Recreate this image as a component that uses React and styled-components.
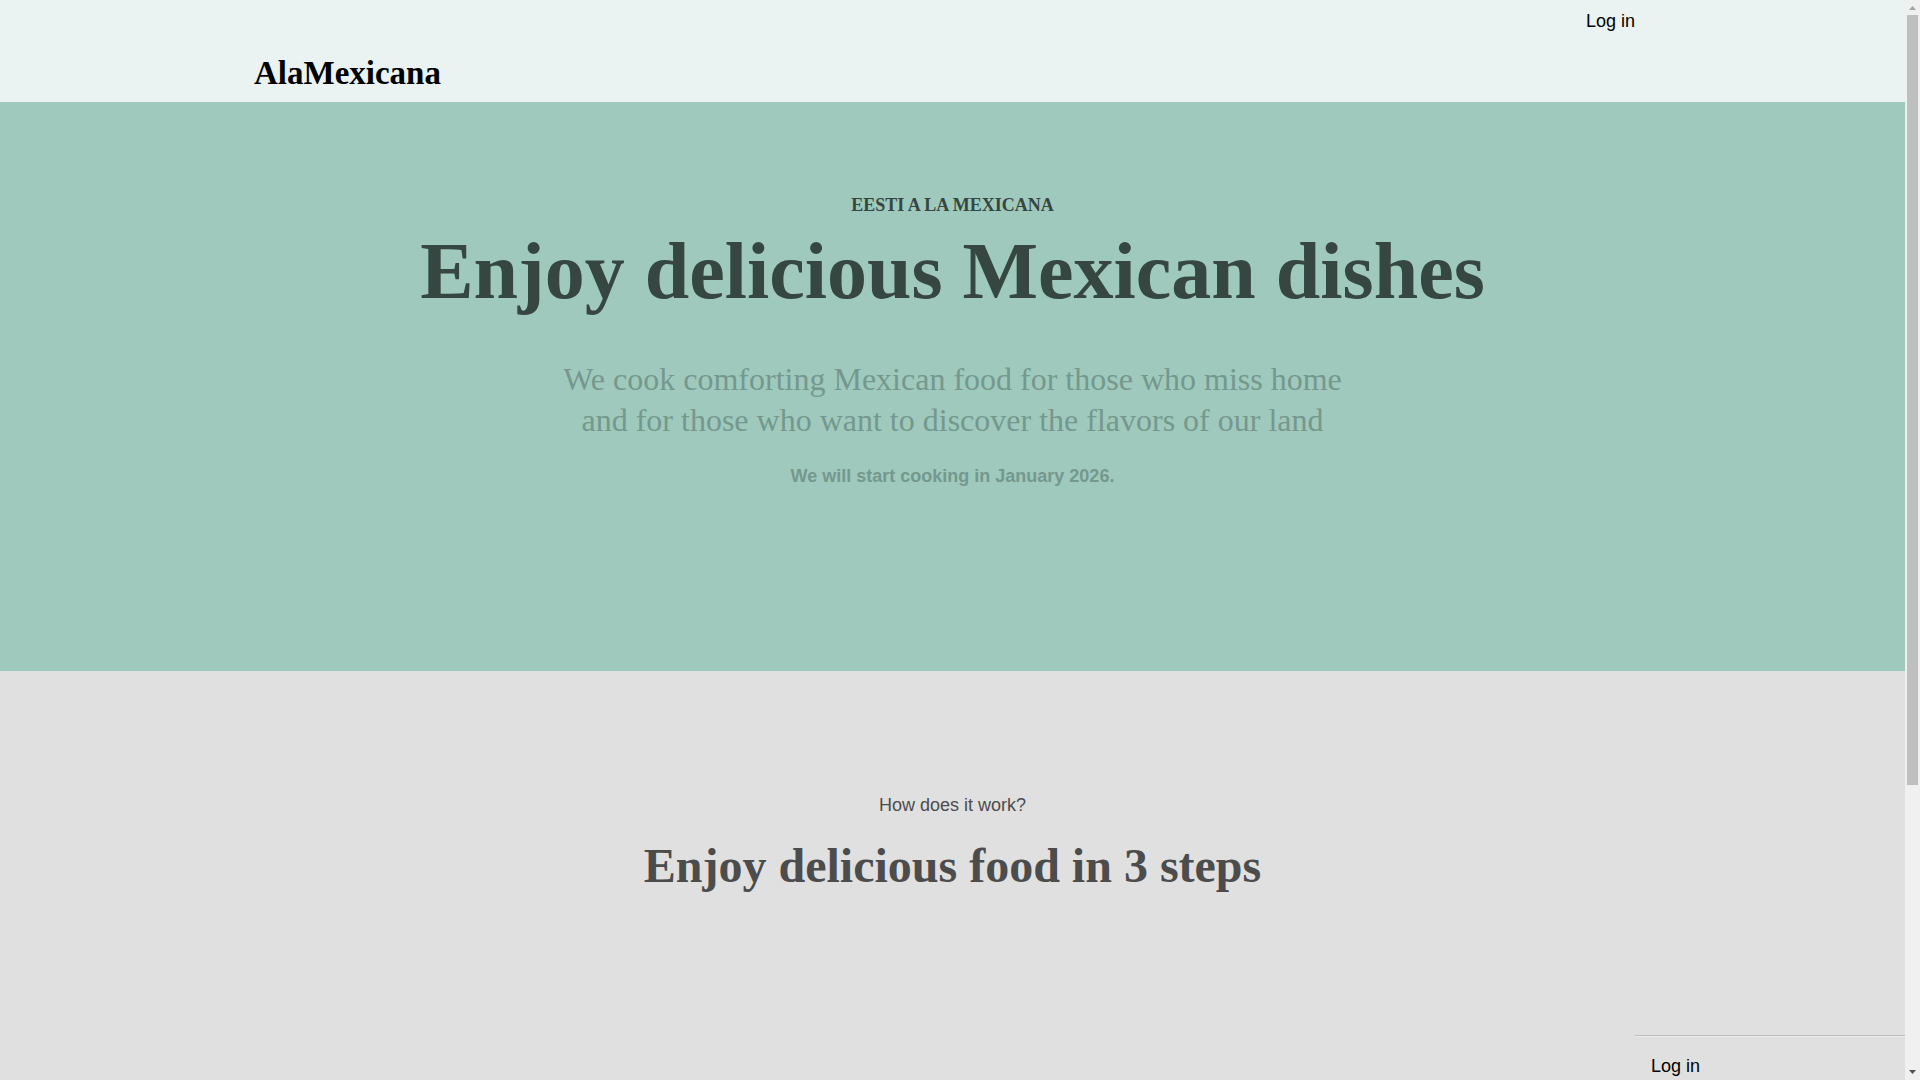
import React from "react";
import styled, { createGlobalStyle } from "styled-components";

const sans = `"Liberation Sans", Arial, sans-serif`;
const serif = `"Liberation Serif", "Times New Roman", serif`;

const GlobalStyle = createGlobalStyle`
  * {
    box-sizing: border-box;
  }
  body {
    margin: 0;
    font-family: ${sans};
    font-size: 18px;
    line-height: 24px;
    background-color: #e0e0e0;
  }
  h1, h2, p {
    margin: 0;
  }
`;

const Container = styled.div`
  display: flex;
  height: 100vh;
  overflow: hidden;
`;
const Content = styled.div`
  flex: 1;
  min-width: 0;
  display: flex;
  flex-direction: column;
`;
const Header = styled.header`
  display: flex;
  justify-content: space-between;
  align-items: flex-start;
  padding: 9px 270px 9px 254px;
  background-color: #eaf3f1;
`;
const Logo = styled.a`
  margin-top: 44px;
  font-family: ${serif};
  font-size: 33px;
  font-weight: 700;
  line-height: 40px;
  color: #000;
  text-decoration: none;
`;
const NavLink = styled.a`
  color: #000;
  text-decoration: none;
`;
const Hero = styled.section`
  display: flex;
  flex-direction: column;
  align-items: center;
  padding: 91px 24px 183px;
  text-align: center;
  background-color: #9fc9bd;
  color: #364641;
`;
const Eyebrow = styled.p`
  font-family: ${serif};
  font-weight: 700;
`;
const Title = styled.h1`
  margin-top: 6px;
  font-family: ${serif};
  font-size: 80px;
  line-height: 96px;
`;
const Lead = styled.p`
  max-width: 800px;
  margin-top: 40px;
  font-family: ${serif};
  font-size: 32px;
  line-height: 41px;
  color: #75988d;
`;
const Notice = styled.p`
  margin-top: 23px;
  font-weight: 700;
  color: #75988d;
`;
const Steps = styled.section`
  flex: 1;
  padding-top: 122px;
  text-align: center;
  background-color: #e0e0e0;
  color: #4c4c4c;
`;
const StepsTitle = styled.h2`
  margin-top: 20px;
  font-family: ${serif};
  font-size: 48px;
  line-height: 58px;
`;
const SideMenu = styled.nav`
  align-self: flex-end;
  width: 270px;
  padding: 18px 16px 2px;
  border-top: 1px solid #bcbcbc;
  box-shadow: inset 0 1px 0 #ebebeb;
`;
const ScrollTrack = styled.div`
  width: 15px;
  display: flex;
  flex-direction: column;
  align-items: center;
  background-color: #f0f0f0;
`;
const ScrollThumb = styled.div`
  width: 11px;
  height: 770px;
  background-color: #bfbfbf;
`;
const Arrow = styled.svg`
  display: block;
  width: 15px;
  height: 15px;
  margin-top: ${(props) => (props.$last ? "auto" : "0")};
`;

const App = () => {
  return (
    <Container>
      <GlobalStyle />
      <Content>
        <Header>
          <Logo href="#">AlaMexicana</Logo>
          <NavLink href="#login">Log in</NavLink>
        </Header>
        <Hero>
          <Eyebrow>EESTI A LA MEXICANA</Eyebrow>
          <Title>Enjoy delicious Mexican dishes</Title>
          <Lead>
            We cook comforting Mexican food for those who miss home and for
            those who want to discover the flavors of our land
          </Lead>
          <Notice>We will start cooking in January 2026.</Notice>
        </Hero>
        <Steps>
          <p>How does it work?</p>
          <StepsTitle>Enjoy delicious food in 3 steps</StepsTitle>
        </Steps>
        <SideMenu>
          <NavLink href="#login">Log in</NavLink>
        </SideMenu>
      </Content>
      <ScrollTrack aria-hidden="true">
        <Arrow viewBox="0 0 15 15">
          <path d="M4 10h7L7.5 6z" fill="#a3a3a3" />
        </Arrow>
        <ScrollThumb />
        <Arrow $last viewBox="0 0 15 15">
          <path d="M4 5h7L7.5 9z" fill="#505050" />
        </Arrow>
      </ScrollTrack>
    </Container>
  );
};

export default App;
